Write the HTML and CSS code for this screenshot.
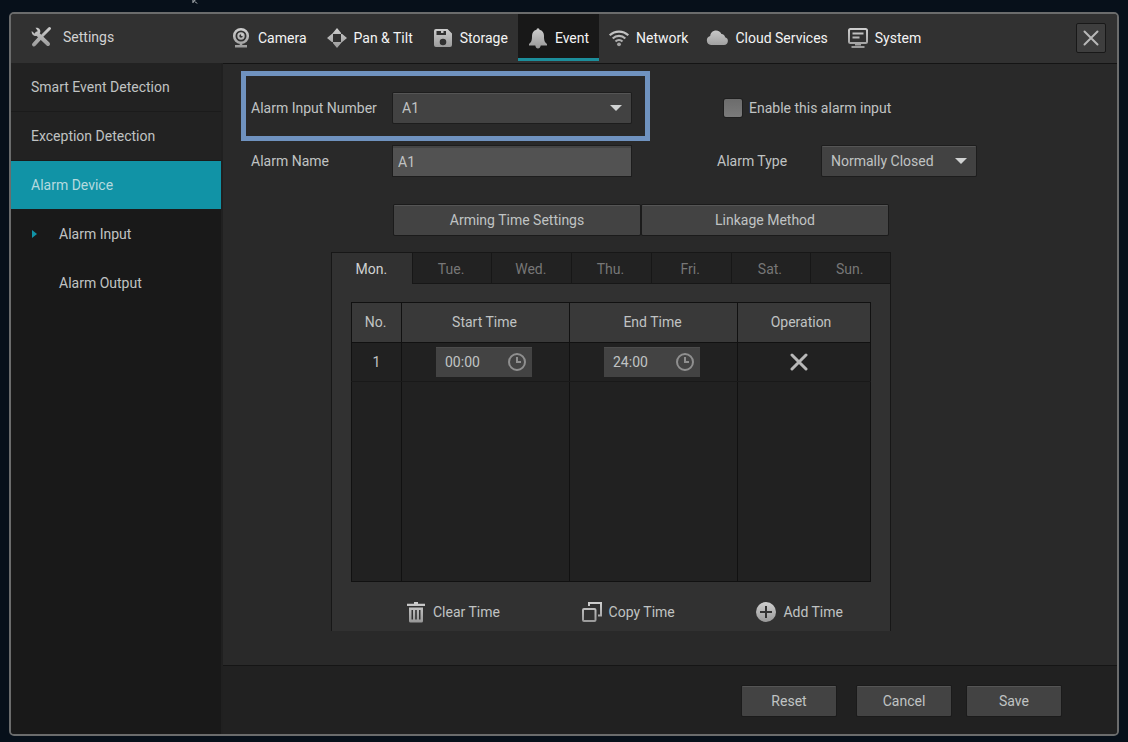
FILE: index.html
```html
<!DOCTYPE html>
<html lang="en">
<head>
<meta charset="utf-8">
<title>Settings</title>
<link rel="stylesheet" href="styles.css">
</head>
<body>
<svg class="cursor" viewBox="0 0 6 4" aria-hidden="true"><path d="M1 0v3M1.500 1.500L3.500 0M3 1.500l2 2" stroke="#c5c9cc" fill="none"/></svg>
<svg class="defs" aria-hidden="true">
  <defs>
    <linearGradient id="metal" gradientUnits="userSpaceOnUse" x1="0" y1="0" x2="0" y2="20">
      <stop offset="0" stop-color="#cfcfcf"/><stop offset="1" stop-color="#999"/>
    </linearGradient>
  </defs>
</svg>
<div class="window">
  <header class="topbar">
    <h1 class="title">
      <svg class="icon" viewBox="0 0 20 20"><g fill="none" stroke="url(#metal)" stroke-linecap="round"><path d="M6 6.500l11 10.500" stroke-width="4"/><path d="M18.500 1.500L11.500 8.500" stroke-width="3"/><path d="M8.500 11.500L3 17.500" stroke-width="4"/></g><path d="M4.500 .8c3-.8 5.500 1.600 4.700 4.800L6 9C3 9.600.4 7.600.7 4l2.800 2.500 2.600-.4.400-2.500z" fill="url(#metal)"/></svg>
      Settings
    </h1>
    <nav class="tabs">
      <a class="tab" href="#"><svg class="icon" viewBox="0 0 20 20"><g fill="none" stroke="url(#metal)"><circle cx="10" cy="8" r="6.800" stroke-width="2.600"/><circle cx="10" cy="8" r="2.700" stroke-width="2"/></g><circle cx="11" cy="7" r="1" fill="#ddd"/><path d="M8.700 15h2.600v2H16v2.500H4V17h4.700z" fill="url(#metal)"/></svg>Camera</a>
      <a class="tab" href="#"><svg class="icon" viewBox="0 0 20 20"><path d="M10 0l5 6H5zM10 20l5-6H5zM0 10l6-5v10zM20 10l-6-5v10z" fill="url(#metal)"/></svg>Pan &amp; Tilt</a>
      <a class="tab" href="#"><svg class="icon" viewBox="0 0 20 20"><path fill-rule="evenodd" d="M3 1h11.500L19 5.500V17a2 2 0 0 1-2 2H3a2 2 0 0 1-2-2V3a2 2 0 0 1 2-2zM3.500 3v4h9.500V3h-2.500v2H8V3zM10 10.700a3.300 3.300 0 1 0 0 6.600 3.300 3.300 0 0 0 0-6.600z" fill="url(#metal)"/></svg>Storage</a>
      <a class="tab active" href="#" aria-current="page"><svg class="icon" viewBox="0 0 20 20"><path d="M8.500 1.800a1.500 1.500 0 0 1 3 0c3 .7 4.500 3 4.500 6 0 4.500.5 6.500 3 8.200v1.500H1V16c2.500-1.700 3-3.700 3-8.200 0-3 1.500-5.300 4.500-6zM7.300 17.500h5.400c-.3 2-1.300 3-2.700 3s-2.400-1-2.700-3z" fill="url(#metal)"/></svg>Event</a>
      <a class="tab" href="#"><svg class="icon" viewBox="0 0 20 20"><g fill="none" stroke="url(#metal)" stroke-width="2.200"><path d="M.7 7.300c5.300-5 13.300-5 18.600 0M3.700 10.500c3.600-3.400 9-3.400 12.600 0M6.500 13.500c2-1.900 5-1.900 7 0"/></g><circle cx="10" cy="16.300" r="1.900" fill="url(#metal)"/></svg>Network</a>
      <a class="tab" href="#"><svg class="icon wide" viewBox="0 0 22 20"><path d="M5 17a4.600 4.600 0 0 1-.8-9C4.500 4.700 7 2.500 10 2.500c2.600 0 4.500 1.400 5.400 3.500 2.100 0 3.500 1.300 3.700 3.200A4 4 0 0 1 18 17z" fill="url(#metal)"/></svg>Cloud Services</a>
      <a class="tab" href="#"><svg class="icon" viewBox="0 0 20 20"><g fill="none" stroke="url(#metal)" stroke-width="2"><rect x="1" y="1" width="18" height="14" rx="1.500"/><path d="M4.500 5.500h11M4.500 9.500h7M7 16.500h6M3.500 19h13"/></g></svg>System</a>
    </nav>
    <button class="close" type="button" aria-label="Close"><svg viewBox="0 0 16 16"><path d="M1.500 1.500l13 13M14.500 1.500l-13 13" stroke="#b8b8b8" stroke-width="2" stroke-linecap="round"/></svg></button>
  </header>

  <div class="body">
    <aside class="sidebar">
      <a class="side-item" href="#">Smart Event Detection</a>
      <a class="side-item" href="#">Exception Detection</a>
      <a class="side-item selected" href="#">Alarm Device</a>
      <a class="side-item sub current" href="#">Alarm Input</a>
      <a class="side-item sub" href="#">Alarm Output</a>
    </aside>

    <main class="content">
      <form class="form">
        <div class="fields">
          <div class="field highlight">
            <label for="number">Alarm Input Number</label>
            <span class="select"><select id="number"><option>A1</option></select></span>
          </div>
          <div class="check">
            <input type="checkbox" id="enable"><label for="enable">Enable this alarm input</label>
          </div>
          <div class="field">
            <label for="name">Alarm Name</label>
            <input class="text" id="name" type="text" value="A1">
          </div>
          <div class="field type">
            <label for="type">Alarm Type</label>
            <span class="select"><select id="type"><option>Normally Closed</option></select></span>
          </div>
        </div>

        <div class="segments">
          <button class="btn" type="button">Arming Time Settings</button>
          <button class="btn" type="button">Linkage Method</button>
        </div>

        <section class="panel">
          <div class="days" role="tablist">
            <button type="button" role="tab" class="day on" aria-selected="true">Mon.</button>
            <button type="button" role="tab" class="day">Tue.</button>
            <button type="button" role="tab" class="day">Wed.</button>
            <button type="button" role="tab" class="day">Thu.</button>
            <button type="button" role="tab" class="day">Fri.</button>
            <button type="button" role="tab" class="day">Sat.</button>
            <button type="button" role="tab" class="day">Sun.</button>
          </div>
          <table class="schedule">
            <colgroup><col class="c-no"><col class="c-time"><col class="c-time"><col></colgroup>
            <thead>
              <tr><th>No.</th><th>Start Time</th><th>End Time</th><th class="op">Operation</th></tr>
            </thead>
            <tbody>
              <tr class="entry">
                <td>1</td>
                <td><span class="time"><input type="text" value="00:00" aria-label="Start time"><svg viewBox="0 0 18 18"><circle cx="9" cy="9" r="8" fill="none" stroke="#8f8f8f" stroke-width="2"/><path d="M9 4v5h4" fill="none" stroke="#8f8f8f" stroke-width="2"/></svg></span></td>
                <td><span class="time"><input type="text" value="24:00" aria-label="End time"><svg viewBox="0 0 18 18"><circle cx="9" cy="9" r="8" fill="none" stroke="#8f8f8f" stroke-width="2"/><path d="M9 4v5h4" fill="none" stroke="#8f8f8f" stroke-width="2"/></svg></span></td>
                <td><button class="remove" type="button" aria-label="Delete"><svg viewBox="0 0 18 18"><path d="M2 2l14 14M16 2L2 16" stroke="#b8b8b8" stroke-width="3" stroke-linecap="round"/></svg></button></td>
              </tr>
              <tr class="blank"><td></td><td></td><td></td><td></td></tr>
            </tbody>
          </table>
          <div class="actions">
            <button type="button"><svg class="icon" viewBox="0 0 20 20"><path fill-rule="evenodd" d="M1 1.800h7V0h4v1.800h7V4H1zM3 5.500h14V19a1.500 1.500 0 0 1-1.500 1.500h-11A1.500 1.500 0 0 1 3 19zM5.500 8v9.500H7V8zM9.200 8v9.500h1.600V8zM13 8v9.500h1.500V8z" fill="url(#metal)"/></svg>Clear Time</button>
            <button type="button"><svg class="icon" viewBox="0 0 20 20"><g fill="none" stroke="url(#metal)" stroke-width="2"><rect x="1" y="7" width="12.500" height="12" rx="1"/><path d="M7 4V1h12v12.500h-3"/></g></svg>Copy Time</button>
            <button type="button"><svg class="icon" viewBox="0 0 20 20"><circle cx="10" cy="10" r="10" fill="url(#metal)"/><path d="M10 4v12M4 10h12" stroke="#333" stroke-width="2"/></svg>Add Time</button>
          </div>
        </section>
      </form>
      <footer class="footer">
        <button class="btn reset" type="button">Reset</button>
        <button class="btn" type="button">Cancel</button>
        <button class="btn" type="button">Save</button>
      </footer>
    </main>
  </div>
</div>
</body>
</html>
```

FILE: styles.css
```css
* {
  box-sizing: border-box;
}

body {
  margin: 0;
  min-height: 100vh;
  padding: 12px 9px 6px;
  display: flex;
  background: #07101a;
  color: #c0c3c3;
  font: 14px/20px Roboto, "Liberation Sans", sans-serif;
}

button,
input,
select {
  font: inherit;
  color: inherit;
}

button {
  padding: 0;
  border: 0;
  background: none;
  cursor: pointer;
}

a {
  color: inherit;
  text-decoration: none;
}

.cursor {
  position: absolute;
  left: 192px;
  top: 0;
  width: 6px;
  height: 4px;
}

.defs {
  position: absolute;
  width: 0;
  height: 0;
}

.icon {
  flex: none;
  width: 20px;
  height: 20px;
  overflow: visible;
}

.icon.wide {
  width: 22px;
  margin-left: -2px;
}

.window {
  flex: 1;
  display: flex;
  flex-direction: column;
  border: 2px solid #6b6c6c;
  border-radius: 5px;
  background: #292929;
  overflow: hidden;
}

.topbar {
  display: flex;
  align-items: center;
  height: 50px;
  padding-right: 11px;
  background: #313131;
  border-bottom: 1px solid #141414;
}

.title {
  display: flex;
  align-items: center;
  gap: 12px;
  width: 210px;
  margin: 0;
  padding-left: 20px;
  padding-bottom: 3px;
  font-size: 14px;
  font-weight: 400;
  color: #d2d2d2;
}

.tabs {
  flex: 1;
  display: flex;
  height: 100%;
}

.tab {
  display: flex;
  align-items: center;
  gap: 7px;
  height: 47px;
  padding: 1px 10px 0;
  color: #f4f4f4;
  white-space: nowrap;
}

.tab.active {
  background: #181818;
  box-shadow: inset 0 -3px #1c8e9b;
}

.close {
  display: grid;
  place-items: center;
  width: 30px;
  height: 30px;
  margin-bottom: 2px;
  background: #3e3e3e;
  border: 1px solid #181818;
  border-radius: 2px;
}

.close svg {
  width: 16px;
  height: 16px;
}

.body {
  flex: 1;
  display: flex;
}

.sidebar {
  width: 212px;
  margin-top: -1px;
  background: #191919;
  border-right: 2px solid #202020;
}

.side-item {
  display: flex;
  align-items: center;
  height: 49px;
  padding-left: 20px;
  background: #222;
  border-bottom: 1px solid #1b1b1b;
}

.side-item.selected {
  background: #1193a6;
  color: #b5dadf;
}

.side-item.sub {
  padding-left: 48px;
  background: none;
  border-color: transparent;
}

.side-item.current::before {
  content: "";
  width: 0;
  margin-left: -27px;
  margin-right: 22px;
  border: 4px solid transparent;
  border-left: 5px solid #1193a6;
  border-right: 0;
}

.content {
  flex: 1;
  display: flex;
  flex-direction: column;
}

.form {
  flex: 1;
  padding: 29px 28px 33px;
}

.fields {
  display: grid;
  grid-template-columns: 380px 1fr;
  gap: 23px 86px;
}

.field {
  position: relative;
  display: grid;
  grid-template-columns: 142px 238px;
  align-items: center;
}

.field.type {
  grid-template-columns: 105px 154px;
}

.highlight::after {
  content: "";
  position: absolute;
  inset: -22px -19px -18px -10px;
  border: 5px solid #6f92bf;
  pointer-events: none;
}

.select {
  position: relative;
}

.select select {
  appearance: none;
  display: block;
  width: 100%;
  height: 30px;
  padding: 0 28px 1px 9px;
  background: #424242;
  border: 0;
  border-top: 1px solid #555;
  border-radius: 1px;
  box-shadow: 0 0 0 1px #1d1d1d;
}

.select::after {
  content: "";
  position: absolute;
  right: 9px;
  top: 12px;
  border: 6px solid transparent;
  border-top-color: #d0d2d2;
  border-bottom: 0;
  pointer-events: none;
}

.text {
  height: 30px;
  padding: 0 5px 1px;
  background: #525252;
  border: 0;
  border-top: 2px solid #454545;
  box-shadow: 0 0 0 1px #1d1d1d;
}

.check {
  display: flex;
  align-items: center;
  gap: 7px;
  padding-left: 7px;
}

.check input {
  appearance: none;
  width: 18px;
  height: 18px;
  margin: 0;
  border-radius: 2px;
  background: linear-gradient(#6c6c6c, #7b7b7b);
  box-shadow: 0 0 0 1px #1f1f1f;
}

.btn {
  width: 94px;
  height: 30px;
  padding-bottom: 1px;
  background: #434343;
  border-top: 1px solid #555;
  border-radius: 1px;
  box-shadow: 0 0 0 1px #1b1b1b;
}

.segments {
  display: flex;
  gap: 2px;
  margin: 29px 0 0 143px;
}

.segments .btn {
  width: 246px;
}

.panel {
  width: 560px;
  margin: 17px 0 0 80px;
  background: #313131;
  border: 1px solid #171717;
  border-bottom: 0;
}

.days {
  display: flex;
}

.day {
  flex: 1;
  height: 31px;
  padding: 2px 2px 0 0;
  background: #222;
  border-left: 1px solid #171717;
  border-bottom: 1px solid #171717;
  color: #777;
}

.day.on {
  background: none;
  border-color: transparent;
  color: #d0d2d2;
}

.schedule {
  width: 520px;
  margin: 18px 0 0 19px;
  table-layout: fixed;
  border-collapse: collapse;
  background: #212121;
}

.c-no {
  width: 50px;
}

.c-time {
  width: 168px;
}

.schedule th,
.schedule td {
  padding: 0;
  border: 1px solid #111;
  text-align: center;
  font-weight: 400;
}

.schedule th {
  height: 40px;
  padding: 0 2px 2px 0;
  background: #393939;
}

.schedule .op {
  padding-right: 6px;
}

.entry td {
  height: 39px;
  border-bottom-color: #191919;
}

.blank td {
  height: 200px;
}

.time {
  display: flex;
  align-items: center;
  width: 96px;
  height: 30px;
  margin: 0 auto 0 34px;
  padding: 0 6px 1px 9px;
  background: #434343;
  border-top: 1px solid #4c4c4c;
}

.time input {
  flex: 1;
  min-width: 0;
  padding: 0;
  border: 0;
  background: none;
}

.time svg {
  width: 18px;
  height: 18px;
}

.remove {
  display: block;
  width: 18px;
  height: 18px;
  margin: 0 auto 0 52px;
}

.remove svg {
  display: block;
}

.actions {
  display: flex;
  justify-content: space-between;
  padding: 20px 47px 9px 74px;
}

.actions button {
  display: flex;
  align-items: center;
  gap: 7px;
}

.footer {
  display: flex;
  justify-content: flex-end;
  gap: 16px;
  padding: 20px 56px 18px;
  background: #212121;
  border-top: 1px solid #151515;
}

.reset {
  margin-right: 5px;
}
```
